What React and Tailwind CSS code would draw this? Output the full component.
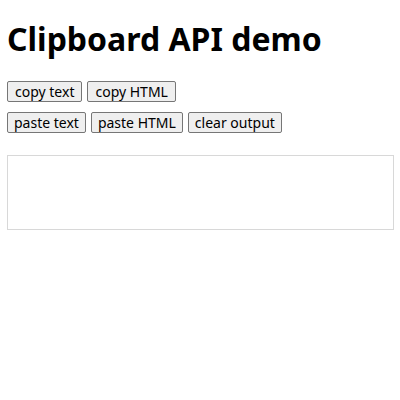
const btn =
  "bg-[#efefef] border border-[#767676] rounded-[2px] h-[21px] text-[14px] leading-none text-black";

export default function App() {
  return (
    <div className="px-[7px] pt-[1px] font-['Noto_Sans',sans-serif] text-black bg-white">
      <h1 className="text-[32px] font-bold leading-[40px] mt-[18px] mb-[22px]">
        Clipboard API demo
      </h1>
      <div className="flex gap-[5px] mb-[10px]">
        <button className={`${btn} px-[7px]`}>copy text</button>
        <button className={`${btn} px-[7px]`}>copy HTML</button>
      </div>
      <div className="flex gap-[5px]">
        <button className={`${btn} px-[6px]`}>paste text</button>
        <button className={`${btn} px-[6px]`}>paste HTML</button>
        <button className={`${btn} px-[6px]`}>clear output</button>
      </div>
      <div className="mt-[22px] h-[75px] w-[387px] border border-[#d8d8d8]"></div>
    </div>
  );
}
